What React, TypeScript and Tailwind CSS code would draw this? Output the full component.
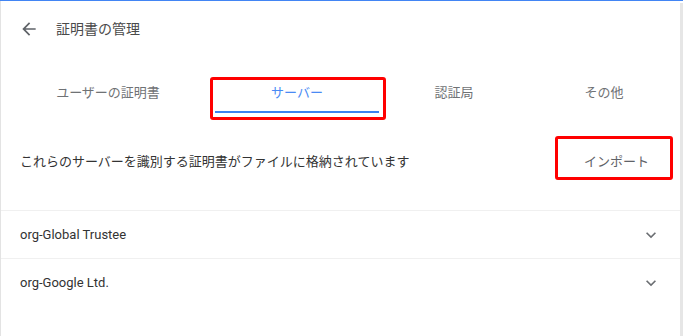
import React from "react";

const font = { fontFamily: "Roboto, 'Noto Sans CJK JP', 'Noto Sans', sans-serif" };

function BackArrow() {
  return (
    <svg width="20" height="20" viewBox="0 0 24 24" fill="#5f6368">
      <path d="M20 11H7.83l5.59-5.59L12 4l-8 8 8 8 1.41-1.41L7.83 13H20v-2z" />
    </svg>
  );
}

function Chevron() {
  return (
    <svg width="20" height="20" viewBox="0 0 24 24" fill="#6b6e72">
      <path d="M16.59 8.59L12 13.17 7.41 8.59 6 10l6 6 6-6z" />
    </svg>
  );
}

export default function App() {
  const tabs = [
    { label: "ユーザーの証明書", w: "w-[214px]", active: false },
    { label: "サーバー", w: "w-[164px]", active: true },
    { label: "認証局", w: "w-[150px]", active: false },
    { label: "その他", w: "w-[150px]", active: false },
  ];
  return (
    <div className="relative w-[683px] h-[336px] bg-white overflow-hidden flex flex-col" style={font}>
      <div className="h-[1px] bg-[#4285f4] shrink-0" />
      <div className="flex flex-1 min-h-0">
        <div className="w-[1px] bg-[#e3e3e3] shrink-0" />
        <div className="flex-1 flex flex-col min-w-0">
          {/* header */}
          <div className="h-[56px] flex items-center pl-[18px] shrink-0">
            <BackArrow />
            <span className="ml-[17px] text-[14px] text-[#4a4a4a]">証明書の管理</span>
          </div>
          {/* tabs */}
          <div className="mt-[16px] h-[40px] flex shrink-0">
            {tabs.map((t) => (
              <div key={t.label} className={`${t.w} relative flex items-center justify-center`}>
                <span className={`text-[13px] ${t.active ? "text-[#4a8af4]" : "text-[#6f7275]"}`}>{t.label}</span>
                {t.active && <div className="absolute left-0 right-0 bottom-0 h-[2px] bg-[#3b82f0]" />}
              </div>
            ))}
          </div>
          {/* description */}
          <div className="h-[97px] flex items-center justify-between pl-[19px] pr-[15px] shrink-0">
            <span className="text-[13px] text-[#333333]">
              これらのサーバーを識別する証明書がファイルに格納されています
            </span>
            <button className="h-8 px-4 text-[13px] text-[#5f6368]">インポート</button>
          </div>
          <div className="h-[1px] bg-[#f0f0f0] shrink-0" />
          <div className="h-[47px] flex items-center justify-between pl-[19px] pr-[19px] shrink-0">
            <span className="text-[13px] text-[#333333]">org-Global Trustee</span>
            <Chevron />
          </div>
          <div className="h-[1px] bg-[#f0f0f0] shrink-0" />
          <div className="h-[48px] flex items-center justify-between pl-[19px] pr-[19px] shrink-0">
            <span className="text-[13px] text-[#333333]">org-Google Ltd.</span>
            <Chevron />
          </div>
        </div>
        <div className="w-[3px] bg-[#e6e6e6] shrink-0 mt-[2px]" />
      </div>

      {/* red annotation boxes */}
      <div className="absolute left-[210px] top-[77px] w-[176px] h-[43px] border-[3px] border-[#ff0000] rounded-[3px]" />
      <div className="absolute left-[555px] top-[136px] w-[118px] h-[44px] border-[3px] border-[#ff0000] rounded-[3px]" />
    </div>
  );
}
